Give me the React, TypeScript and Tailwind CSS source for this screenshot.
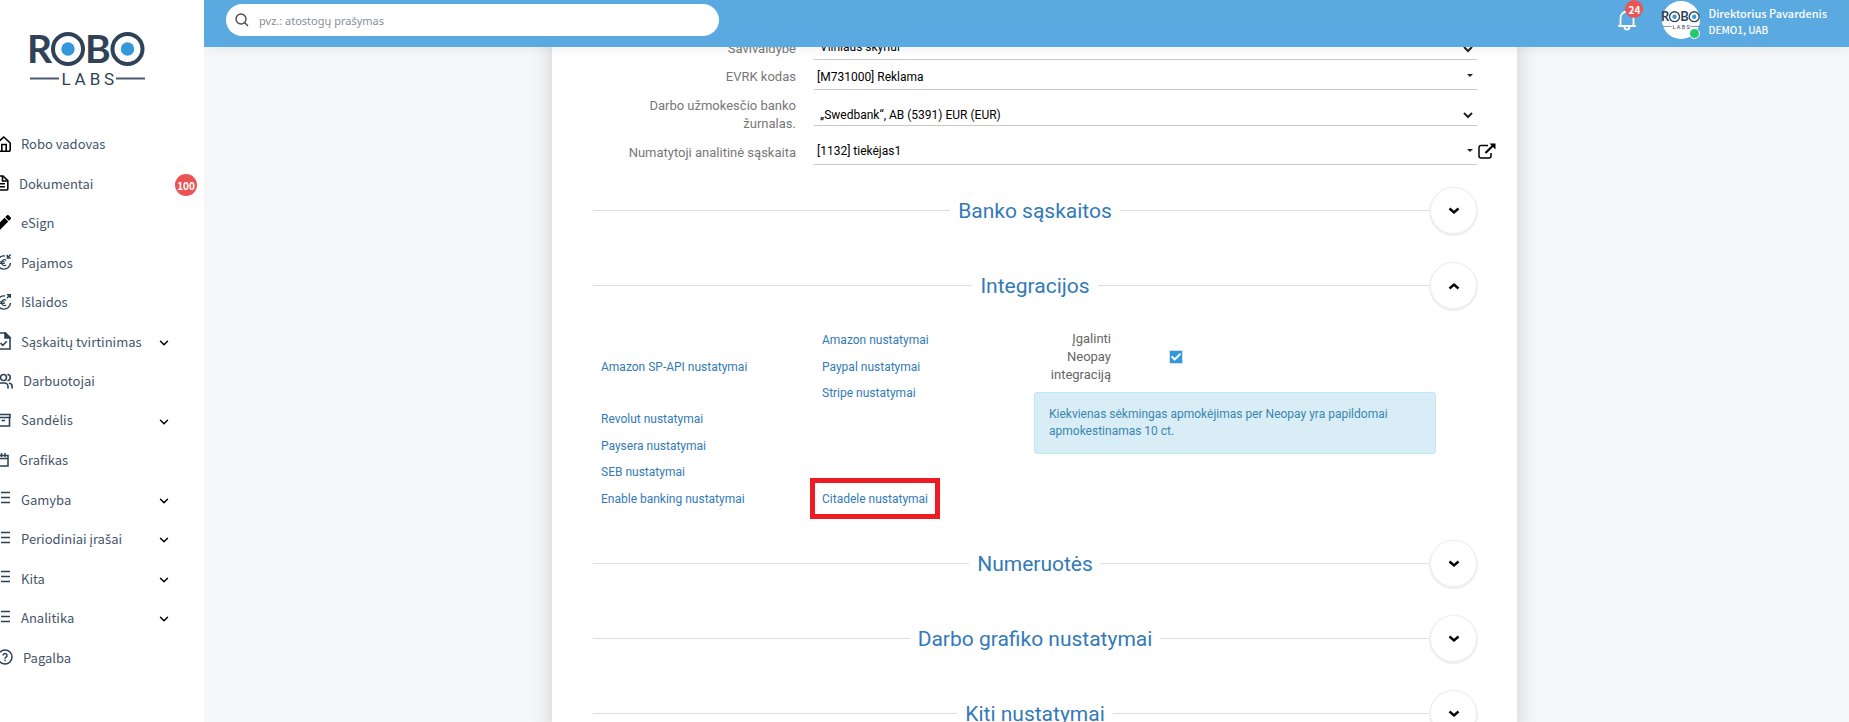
import React from "react";
import { FaCheck, FaPen } from "react-icons/fa";
import { FiChevronDown } from "react-icons/fi";

interface MenuItem {
  label: string;
  icon: React.ReactNode;
  expandable?: boolean;
  badge?: string;
}

interface IconProps {
  className?: string;
  children: React.ReactNode;
}

const LineIcon: React.FC<IconProps> = ({ className, children }) => (
  <svg
    viewBox="0 0 18 18"
    fill="none"
    stroke="currentColor"
    strokeWidth="1.6"
    className={className}
    aria-hidden="true"
  >
    {children}
  </svg>
);

const HomeIcon = () => (
  <LineIcon className="w-[18px] h-[18px] text-black">
    <path d="M4 8 10.800 2l6.400 6V15a1.2 1.2 0 0 1-1.2 1.2H5A1.2 1.2 0 0 1 4 15Z" />
    <path d="M8.800 16V9.500h4.400V16" />
  </LineIcon>
);

const DocumentIcon = () => (
  <svg viewBox="0 0 16 18" fill="none" stroke="currentColor" strokeWidth="1.6" className="w-4 h-[18px] text-black">
    <path d="M2 3A1 1 0 0 1 3 2h7l4.8 4.6V15a1 1 0 0 1-1 1H3a1 1 0 0 1-1-1Z" />
    <path d="M9.5 2v5h5M5 9.8h7M5 12.8h7" />
  </svg>
);

const IncomeIcon = () => (
  <LineIcon className="w-[18px] h-[18px] text-[#2d4154]">
    <path d="M12 3A6.600 6.600 0 1 0 17.500 9.500" strokeDasharray="15 1.5" strokeWidth="1.4" />
    <path d="M13.300 7.400a2.900 2.900 0 1 0 0 4.400M7 8.900h4.800M7 10.500h4.800" strokeWidth="1.1" />
    <path d="m17.700 1.500-3 3M14.300 1.800v3.200h3.400" strokeWidth="1.4" />
  </LineIcon>
);

const ExpenseIcon = () => (
  <LineIcon className="w-[18px] h-[18px] text-[#2d4154]">
    <path d="M12 3A6.600 6.600 0 1 0 17.500 9.500" strokeDasharray="15 1.5" strokeWidth="1.4" />
    <path d="M13.300 7.400a2.900 2.900 0 1 0 0 4.400M7 8.900h4.800M7 10.500h4.800" strokeWidth="1.1" />
    <path d="m13.800 5.200 3.200-3.200M13.800 1.700h3.500V5" strokeWidth="1.4" />
  </LineIcon>
);

const ApprovalIcon = () => (
  <LineIcon className="w-[18px] h-[18px] text-[#2d4154]">
    <path d="M2 1h10.500L17 5.500V17H2Z" />
    <path d="M12 1v5h5Z" fill="currentColor" />
    <path d="m7.500 11 2.300 2.300 4-4" />
  </LineIcon>
);

const PeopleIcon = () => (
  <svg viewBox="0 0 20 18" fill="none" stroke="currentColor" strokeWidth="1.6" strokeLinecap="round" className="w-5 h-[18px] text-[#2d4154]">
    <circle cx="10.500" cy="5.500" r="3" />
    <path d="M2 16v-1.500a3.500 3.500 0 0 1 3.500-3.500h6a3.500 3.500 0 0 1 3.500 3.500V16M15 2.600a3 3 0 0 1 0 5.800M16.500 11.300a3 3 0 0 1 2.600 3V16" />
  </svg>
);

const ArchiveIcon = () => (
  <LineIcon className="w-[18px] h-[18px] text-[#2d4154]">
    <path d="M1 3.500h16v3H1ZM2 6.500V15h14.500V6.500M8.500 9.500H12" />
  </LineIcon>
);

const CalendarIcon = () => (
  <svg viewBox="0 0 16 18" fill="none" stroke="currentColor" strokeWidth="1.5" className="w-4 h-[18px] text-[#2d4154]">
    <path d="M1 4.500h14V15H1ZM1 7.500h14M5 2v4M8.500 2v4M12 2v4" />
  </svg>
);

const ListIcon = () => (
  <LineIcon className="w-[18px] h-[18px] text-[#2d4154]">
    <path d="M8 2.500h9M8 7.500h9M8 12.500h9" />
  </LineIcon>
);

const HelpIcon = () => (
  <svg viewBox="0 0 20 18" fill="none" stroke="currentColor" strokeWidth="1.500" className="w-5 h-[18px] text-[#2d4154]">
    <circle cx="12" cy="9" r="7" />
    <path d="M10 7.500a2 2 0 1 1 3 1.700c-.7.400-1 .7-1 1.500M12 11.800v1.400" />
  </svg>
);

const menuItems: MenuItem[] = [
  { label: "Robo vadovas", icon: <HomeIcon /> },
  { label: "Dokumentai", icon: <DocumentIcon />, badge: "100" },
  { label: "eSign", icon: <FaPen className="w-[15px] h-[15px] ml-[3px] text-black" /> },
  { label: "Pajamos", icon: <IncomeIcon /> },
  { label: "Išlaidos", icon: <ExpenseIcon /> },
  { label: "Sąskaitų tvirtinimas", icon: <ApprovalIcon />, expandable: true },
  { label: "Darbuotojai", icon: <PeopleIcon /> },
  { label: "Sandėlis", icon: <ArchiveIcon />, expandable: true },
  { label: "Grafikas", icon: <CalendarIcon /> },
  { label: "Gamyba", icon: <ListIcon />, expandable: true },
  { label: "Periodiniai įrašai", icon: <ListIcon />, expandable: true },
  { label: "Kita", icon: <ListIcon />, expandable: true },
  { label: "Analitika", icon: <ListIcon />, expandable: true },
  { label: "Pagalba", icon: <HelpIcon /> },
];

// the menu font has no š and ė of its own, so these come from Noto Sans
const MenuLabel: React.FC<{ text: string }> = ({ text }) => (
  <span className="ml-[10px] whitespace-pre">
    {text.split(/([šė])/).map((part, i) =>
      part === "š" || part === "ė" ? (
        <span key={i} className="font-['Noto_Sans',sans-serif]">{part}</span>
      ) : (
        part
      )
    )}
  </span>
);

const Logo: React.FC<{ className?: string }> = ({ className }) => (
  <svg viewBox="0 0 115 54" className={className} role="img" aria-label="Robo Labs">
    <g fill="#2f4256" fontFamily="Lato, sans-serif" fontWeight="700">
      <text x="-3" y="31" fontSize="39">R</text>
      <text x="55" y="31" fontSize="39">B</text>
    </g>
    <g fill="#fff" stroke="#2f4256" strokeWidth="4">
      <circle cx="38" cy="17" r="15" />
      <circle cx="97.500" cy="17" r="15" />
    </g>
    <circle cx="38" cy="17" r="6.700" fill="#3498db" />
    <circle cx="97.500" cy="17" r="6.700" fill="#3498db" />
    <path d="M0 46.500h29M86 46.500h29" stroke="#4a5d70" strokeWidth="2" />
    <g fill="#2f4256" fontFamily="Roboto, sans-serif" fontSize="17" textAnchor="middle">
      <text x="36" y="53">L</text>
      <text x="50" y="53">A</text>
      <text x="65" y="53">B</text>
      <text x="79" y="53">S</text>
    </g>
  </svg>
);

const Sidebar = () => (
  <aside className="w-[204px] shrink-0 bg-white overflow-hidden z-20">
    <a href="#" className="block pt-8 pl-[30px]">
      <Logo className="w-[115px] h-[54px] overflow-visible" />
    </a>
    <ul className="mt-[38px] h-[553px] flex flex-col">
      {menuItems.map((item) => (
        <li key={item.label} className="flex-1">
          <a href="#" className="h-full flex items-center -ml-[7px] pr-[7px] text-[13px] text-[#44566a]">
            {item.icon}
            <MenuLabel text={item.label} />
            {item.expandable && <FiChevronDown className="w-[14px] h-[14px] ml-auto mr-[26px] mt-[3px] text-black" strokeWidth={2.5} />}
            {item.badge && (
              <span className="ml-auto w-[22px] h-[22px] mt-1 rounded-full bg-[#ea5455] text-white text-[10px] font-bold flex items-center justify-center">
                {item.badge}
              </span>
            )}
          </a>
        </li>
      ))}
    </ul>
  </aside>
);

const Header = () => (
  <header className="relative z-10 h-[47px] shrink-0 bg-[#5aa9e0] shadow-[0_2px_12px_rgba(0,0,0,0.06)] flex items-start justify-between px-[22px]">
    <label className="mt-1 w-[493px] h-8 rounded-full bg-white flex items-center pl-[9px]">
      <svg viewBox="0 0 14 14" fill="none" stroke="#4b4b4b" strokeWidth="1.400" className="w-[14px] h-[14px]">
        <circle cx="6" cy="6" r="5" />
        <path d="m9.500 9.500 3.500 3.500" />
      </svg>
      <input
        type="text"
        aria-label="Paieška"
        placeholder="pvz.: atostogų prašymas"
        className="ml-[10px] flex-1 h-full bg-transparent outline-none font-['Noto_Sans',sans-serif] text-[11px] placeholder:text-[#8a8f99]"
      />
    </label>
    <div className="flex items-start text-white">
      <button type="button" aria-label="Pranešimai" className="relative mt-[9px]">
        <svg viewBox="0 0 20 22" fill="none" stroke="currentColor" strokeWidth="1.800" className="w-5 h-[22px]">
          <path d="M1 17h18M3.500 17V9a6.500 6.500 0 0 1 13 0v8M10 3V1M7.500 18a2.500 2.500 0 0 0 5 0" />
        </svg>
        <span className="absolute -top-[9px] left-2 w-[18px] h-[18px] rounded-full bg-[#ea5455] text-[10px] font-bold flex items-center justify-center">
          24
        </span>
      </button>
      <div className="relative ml-[25px] mt-px">
        <div className="w-[38px] h-[38px] rounded-full bg-white flex items-center justify-center">
          <Logo className="w-[38px] h-[18px] shrink-0 overflow-visible" />
        </div>
        <span className="absolute right-0 bottom-0 w-[11px] h-[11px] rounded-full bg-[#28c76f] border border-white" />
      </div>
      <div className="ml-2 mt-1 whitespace-nowrap">
        <p className="text-[11px] font-medium leading-[18px]">Direktorius Pavardenis</p>
        <p className="text-[10px] font-medium leading-4">DEMO1, UAB</p>
      </div>
    </div>
  </header>
);

interface FieldProps {
  id: string;
  label: string;
  value: string;
  rowClass: string;
  labelClass: string;
  fieldClass: string;
}

const FieldRow: React.FC<FieldProps & { children: React.ReactNode }> = ({ id, label, rowClass, labelClass, children }) => (
  <div className={`grid grid-cols-[203px_1fr] gap-x-[18px] items-start ${rowClass}`}>
    <label htmlFor={id} className={`pl-8 text-right text-[13px] leading-[18px] text-[#777] ${labelClass}`}>
      {label}
    </label>
    {children}
  </div>
);

const SelectRow: React.FC<FieldProps> = (props) => (
  <FieldRow {...props}>
    <div className="relative">
      <select
        id={props.id}
        defaultValue={props.value}
        className={`w-full appearance-none bg-transparent outline-none border-b border-[#c8c8c8] pl-[6px] text-xs text-black ${props.fieldClass}`}
      >
        <option>{props.value}</option>
      </select>
      <svg viewBox="0 0 10 7" fill="none" stroke="#222" strokeWidth="2" className="absolute right-1 bottom-[7px] w-[10px] h-[7px]">
        <path d="m1 1 4 4 4-4" />
      </svg>
    </div>
  </FieldRow>
);

const LookupRow: React.FC<FieldProps & { external?: boolean }> = (props) => (
  <FieldRow {...props}>
    <div className="relative">
      <input
        id={props.id}
        type="text"
        defaultValue={props.value}
        className={`w-full bg-transparent outline-none border-b border-[#c8c8c8] pl-[3px] text-xs text-black ${props.fieldClass}`}
      />
      <span className="absolute right-1 bottom-[13px] border-x-[3px] border-x-transparent border-t-[3px] border-t-[#222]" />
      {props.external && (
        <button type="button" aria-label="Atidaryti" className="absolute left-full bottom-[6px] ml-px">
          <svg viewBox="0 0 18 16" fill="none" stroke="#000" className="w-[18px] h-4">
            <path d="M10 2.500H3a2 2 0 0 0-2 2V13a2 2 0 0 0 2 2h8a2 2 0 0 0 2-2v-3" strokeWidth="1.500" />
            <path d="m7.500 10 7-7" strokeWidth="2.200" />
            <path d="M11.500.5H17.500V6.500Z" fill="#000" stroke="none" />
          </svg>
        </button>
      )}
    </div>
  </FieldRow>
);

const SectionHeader: React.FC<{ title: string; open?: boolean }> = ({ title, open }) => (
  <div className="grid grid-cols-[1fr_auto_1fr] items-center h-[47px]">
    <div className="h-px bg-[#dedede]" />
    <h2 className="px-2 pt-px text-[21px] leading-7 text-[#337ab7]">{title}</h2>
    <div className="flex items-center">
      <div className="h-px flex-1 bg-[#dedede]" />
      <button
        type="button"
        aria-label={title}
        aria-expanded={open ? true : false}
        className="w-[47px] h-[47px] rounded-full bg-white border border-[#f0f0f0] shadow-[0_1px_1px_1px_#eeeeee] flex items-center justify-center"
      >
        <svg viewBox="0 0 12 8" fill="none" stroke="#000" strokeWidth="2.400" className="w-3 h-2">
          <path d={open ? "m1.500 6.500 4.500-4 4.500 4" : "m1.500 1.500 4.500 4 4.500-4"} />
        </svg>
      </button>
    </div>
  </div>
);

const integrationLinks: (string | null)[][] = [
  [null, "Amazon nustatymai"],
  ["Amazon SP-API nustatymai", "Paypal nustatymai"],
  [null, "Stripe nustatymai"],
  ["Revolut nustatymai", null],
  ["Paysera nustatymai", null],
  ["SEB nustatymai", null],
  ["Enable banking nustatymai", "Citadele nustatymai"],
];

const Integrations = () => (
  <div className="flex items-start pt-[18px] pl-2">
    <div className="grid grid-cols-[221px_212px] grid-rows-7 h-[185px]">
      {integrationLinks.flat().map((link, i) => (
        <div key={i} className="flex items-center text-xs text-[#337ab7]">
          {link && (
            <span className="relative">
              <a href="#">{link}</a>
              {link === "Citadele nustatymai" && (
                <span className="absolute -inset-x-3 -top-[13px] -bottom-3 border-5 border-[#ed1c24] pointer-events-none" />
              )}
            </span>
          )}
        </div>
      ))}
    </div>
    <div className="flex-1 mr-[41px]">
      <div className="flex items-center pt-[3px]">
        <label htmlFor="neopay" className="w-[77px] pl-4 text-right text-[13px] leading-[18px] text-[#666]">
          Įgalinti Neopay integraciją
        </label>
        <span className="relative ml-[58px] w-[14px] h-[14px]">
          <input id="neopay" type="checkbox" defaultChecked className="block appearance-none w-[14px] h-[14px] border border-[#d5e4f0] bg-[#3598dc]" />
          <FaCheck className="absolute left-[2px] top-[2px] w-[10px] h-[10px] text-white pointer-events-none" />
        </span>
      </div>
      <div className="mt-2 px-[14px] py-[13px] rounded-[3px] border border-[#bce8f1] bg-[#d9edf7] text-xs leading-[17px] text-[#3a87ad]">
        Kiekvienas sėkmingas apmokėjimas per Neopay yra papildomai apmokestinamas 10 ct.
      </div>
    </div>
  </div>
);

export default function App() {
  return (
    <div className="h-screen flex overflow-hidden bg-[#f6f7f9] font-['Noto_Sans_CJK_SC','Noto_Sans',sans-serif]">
      <Sidebar />
      <div className="flex-1 min-w-0 flex flex-col">
        <Header />
        <main className="flex-1 min-h-0 overflow-hidden pl-4 font-[Roboto,sans-serif]">
          <div className="-mt-4 mx-auto w-full max-w-[965px] bg-white pl-[41px] pr-10 shadow-[0_0_22px_rgba(0,0,0,0.16)]">
            <form>
              <SelectRow id="municipality" label="Savivaldybė" value="Vilniaus skyriui" rowClass="h-[29px]" labelClass="mt-[9px]" fieldClass="h-[29px] pt-1" />
              <LookupRow id="evrk" label="EVRK kodas" value="[M731000] Reklama" rowClass="h-[30px]" labelClass="mt-2" fieldClass="h-[30px] pt-1" />
              <SelectRow id="journal" label="Darbo užmokesčio banko žurnalas." value="„Swedbank“, AB (5391) EUR (EUR)" rowClass="h-[43px]" labelClass="mt-[7px]" fieldClass="h-9 pt-[14px]" />
              <LookupRow id="analytic" label="Numatytoji analitinė sąskaita" value="[1132] tiekėjas1" rowClass="h-8" labelClass="mt-[11px]" fieldClass="h-8 pt-1" external />
            </form>
            <div className="mt-[22px] flex flex-col gap-7">
              <SectionHeader title="Banko sąskaitos" />
              <section>
                <SectionHeader title="Integracijos" open />
                <Integrations />
              </section>
              <SectionHeader title="Numeruotės" />
              <SectionHeader title="Darbo grafiko nustatymai" />
              <SectionHeader title="Kiti nustatymai" />
            </div>
          </div>
        </main>
      </div>
    </div>
  );
}
